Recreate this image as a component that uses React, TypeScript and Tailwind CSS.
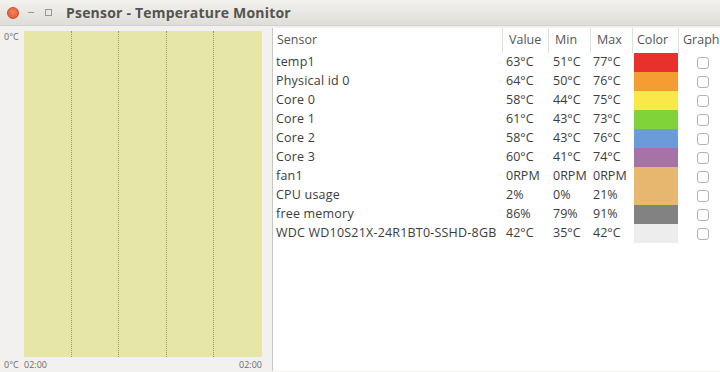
import React from 'react'

const rows = [
  { name: 'temp1', value: '63°C', min: '51°C', max: '77°C', color: '#e8312c' },
  { name: 'Physical id 0', value: '64°C', min: '50°C', max: '76°C', color: '#f59d33' },
  { name: 'Core 0', value: '58°C', min: '44°C', max: '75°C', color: '#f8e848' },
  { name: 'Core 1', value: '61°C', min: '43°C', max: '73°C', color: '#80d43a' },
  { name: 'Core 2', value: '58°C', min: '43°C', max: '76°C', color: '#6b9bd9' },
  { name: 'Core 3', value: '60°C', min: '41°C', max: '74°C', color: '#a673a8' },
  { name: 'fan1', value: '0RPM', min: '0RPM', max: '0RPM', color: '#e7b66f' },
  { name: 'CPU usage', value: '2%', min: '0%', max: '21%', color: '#e7b66f' },
  { name: 'free memory', value: '86%', min: '79%', max: '91%', color: '#828282' },
  { name: 'WDC WD10S21X-24R1BT0-SSHD-8GB', value: '42°C', min: '35°C', max: '42°C', color: '#ededed' },
]

function TitleBar() {
  return (
    <div className="h-[26px] flex items-center bg-gradient-to-b from-[#f3f2ef] to-[#dfddd8] border-b border-[#d3d1cc]">
      <div className="flex items-center gap-[7px] pl-[7px]">
        <span className="w-[12px] h-[12px] rounded-full bg-[radial-gradient(circle_at_50%_40%,#f4845a,#e0552b)] border border-[#c9502f]" />
        <span className="w-[10px] h-[10px] flex items-center justify-center">
          <span className="w-[6px] h-[1px] bg-[#9a9893]" />
        </span>
        <span className="w-[10px] h-[10px] flex items-center justify-center">
          <span className="w-[7px] h-[7px] border border-[#9a9893]" />
        </span>
      </div>
      <span className="ml-[13px] text-[14px] font-bold text-[#55534f] tracking-[0.2px]">
        Psensor - Temperature Monitor
      </span>
    </div>
  )
}

function Graph() {
  return (
    <div className="w-[272px] flex flex-col bg-[#f2f1ef] text-[9px] text-[#6a6a6a]">
      <div className="flex flex-1 pt-[3px]">
        <div className="w-[24px] pl-[4px] leading-none pt-[1px]">0°C</div>
        <div className="w-[238px] grid grid-cols-5 bg-[#e6e6a7]">
          {[0, 1, 2, 3, 4].map(i => (
            <div key={i} className={i < 4 ? 'border-r border-dotted border-[#9a9a5c]' : ''} />
          ))}
        </div>
      </div>
      <div className="flex h-[15px] items-center">
        <div className="w-[24px] pl-[4px]">0°C</div>
        <div className="w-[238px] flex justify-between">
          <span>02:00</span>
          <span>02:00</span>
        </div>
      </div>
    </div>
  )
}

function Checkbox() {
  return <span className="w-[12px] h-[12px] rounded-[3px] border border-[#b5b3ae] bg-white" />
}

function SensorTable() {
  const head = 'h-[25px] flex items-center border-r border-[#e2e0dc] pl-[4px]'
  return (
    <div className="flex-1 bg-white border-l border-[#c9c7c2] mb-[1px] overflow-hidden text-[12.5px] text-[#3c3c3c]">
      <div className="flex text-[#555]">
        <div className={`${head} w-[230px]`}>Sensor</div>
        <div className={`${head} w-[46px] pl-[6px]`}>Value</div>
        <div className={`${head} w-[42px] pl-[6px]`}>Min</div>
        <div className={`${head} w-[42px] pl-[6px]`}>Max</div>
        <div className={`${head} w-[46px]`}>Color</div>
        <div className={`${head} flex-1 border-r-0 whitespace-nowrap`}>Graph</div>
      </div>
      {rows.map(r => (
        <div key={r.name} className="flex h-[19px] items-center">
          <div className="w-[230px] pl-[3px] whitespace-nowrap tracking-[0.2px]">{r.name}</div>
          <div className="w-[46px] pl-[3px] whitespace-nowrap">{r.value}</div>
          <div className="w-[42px] pl-[4px] whitespace-nowrap">{r.min}</div>
          <div className="w-[42px] pl-[2px] whitespace-nowrap">{r.max}</div>
          <div className="w-[46px] h-full px-[1px]">
            <div className="w-full h-full" style={{ background: r.color }} />
          </div>
          <div className="flex-1 flex pl-[18px]">
            <Checkbox />
          </div>
        </div>
      ))}
    </div>
  )
}

export default function App() {
  return (
    <div className="w-[720px] h-[372px] flex flex-col bg-[#f2f1ef] overflow-hidden" style={{ fontFamily: '"Open Sans", "DejaVu Sans", sans-serif' }}>
      <TitleBar />
      <div className="flex flex-1 pt-[2px]">
        <Graph />
        <SensorTable />
      </div>
    </div>
  )
}
